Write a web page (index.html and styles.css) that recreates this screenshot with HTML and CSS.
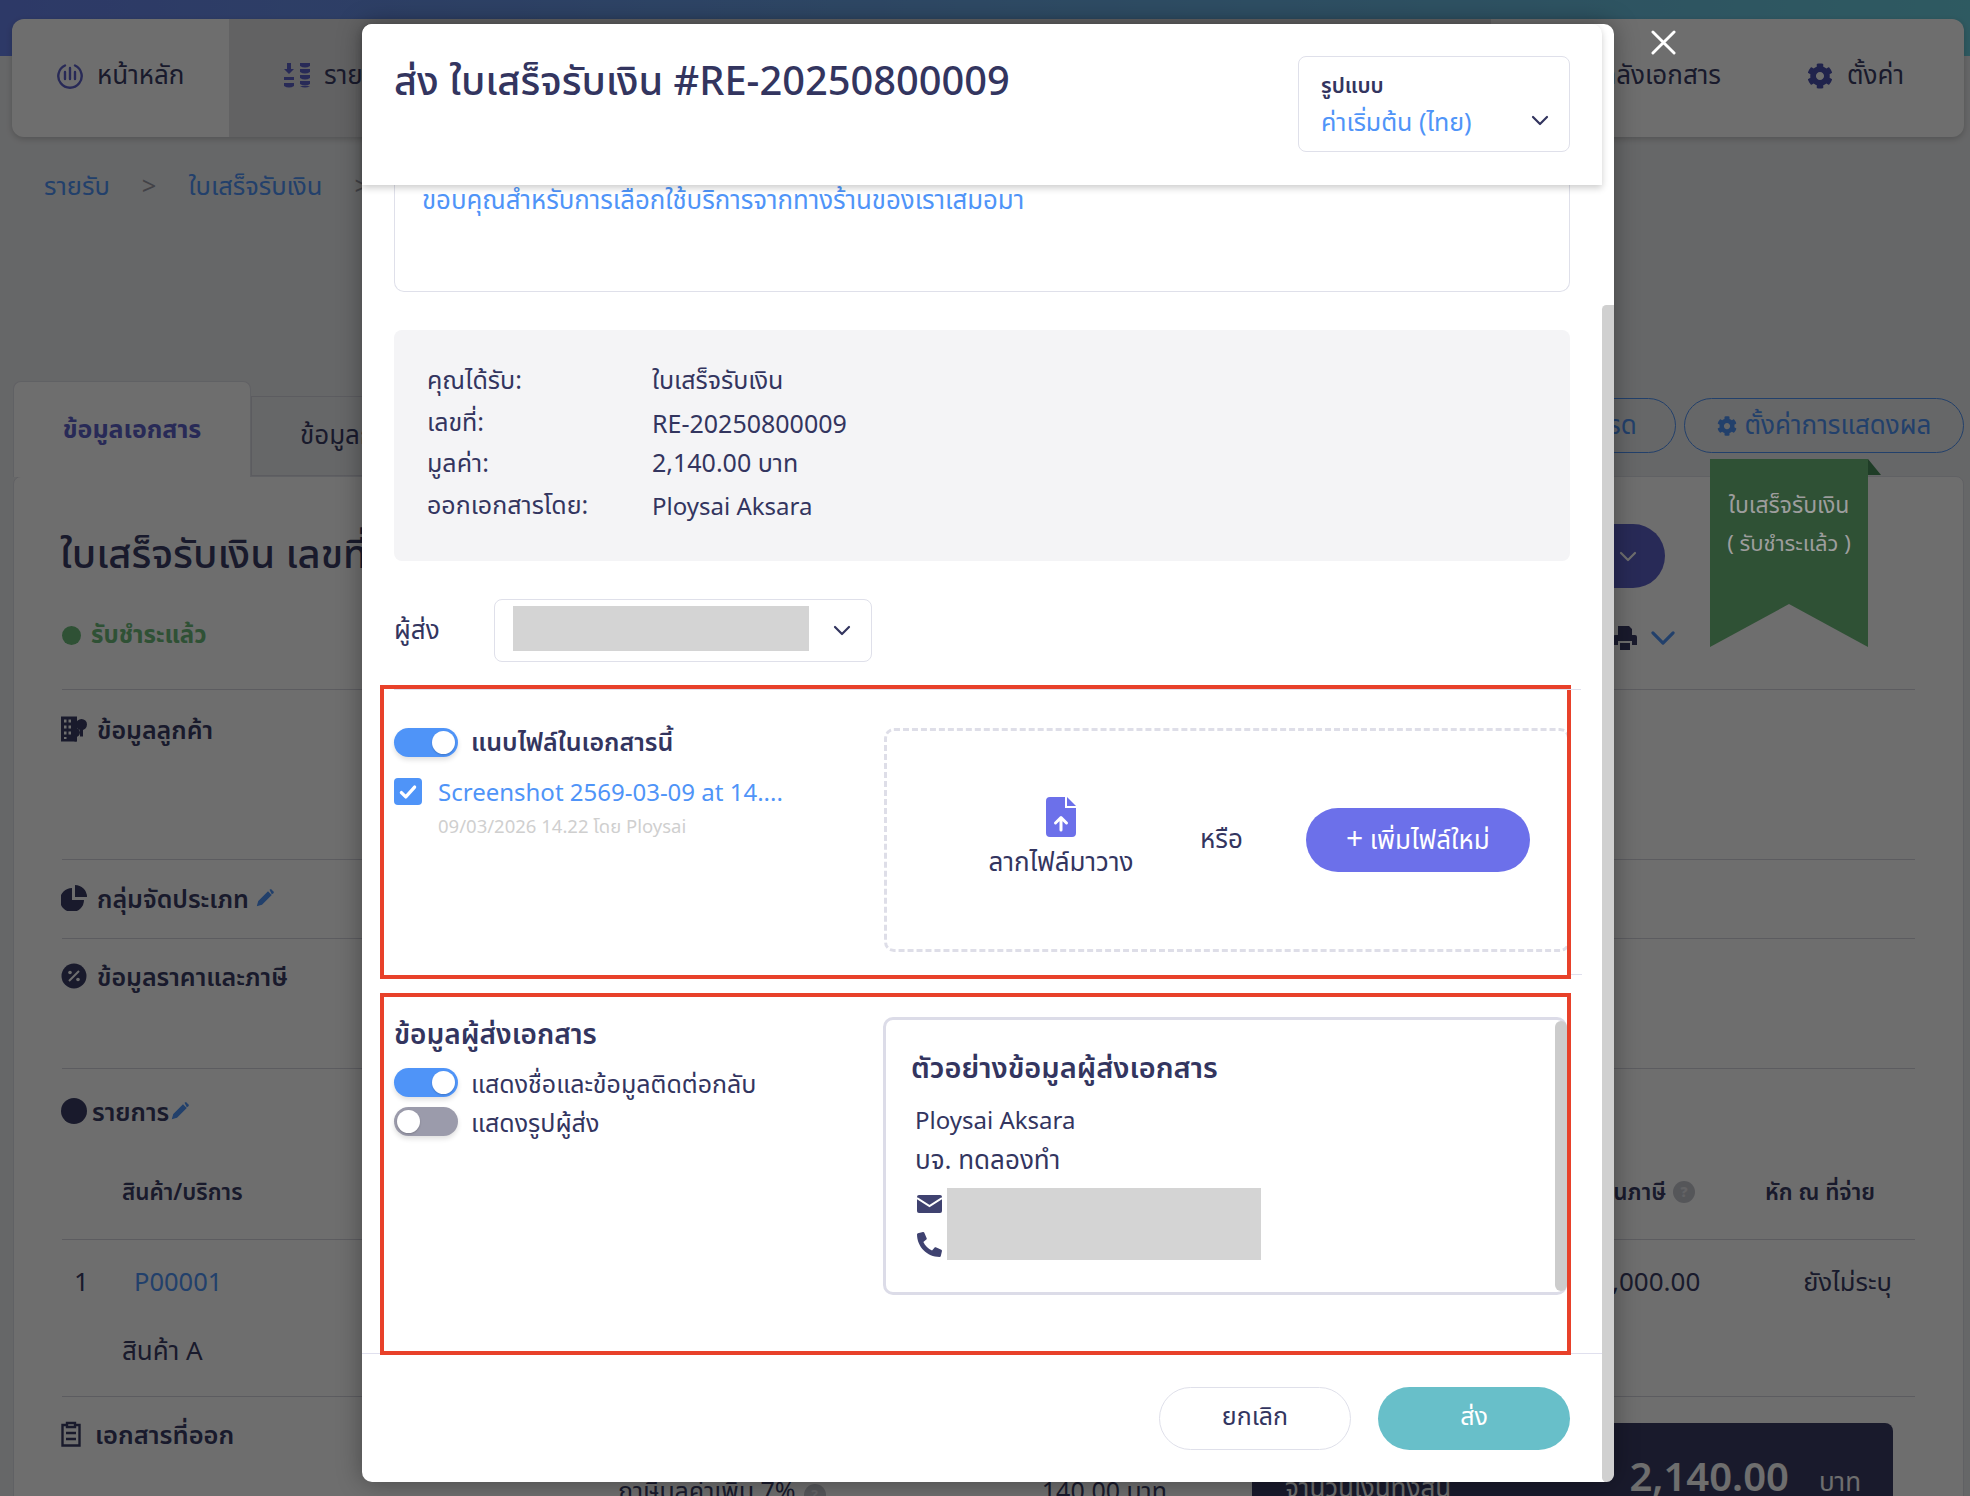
FILE: index.html
```html
<!DOCTYPE html>
<html lang="th">
<head>
<meta charset="utf-8">
<title>ส่ง ใบเสร็จรับเงิน</title>
<link rel="stylesheet" href="styles.css">
</head>
<body>
<svg class="defs" width="0" height="0">
  <symbol id="gear" viewBox="0 0 512 512"><path fill="currentColor" d="M487.4 315.7l-42.6-24.6c4.3-23.2 4.3-47 0-70.2l42.6-24.6c4.9-2.8 7.1-8.6 5.5-14-11.1-35.6-30-67.8-54.7-94.6-3.8-4.1-10-5.1-14.8-2.3L380.8 110c-17.9-15.4-38.5-27.3-60.8-35.1V25.8c0-5.6-3.9-10.5-9.4-11.7-36.7-8.2-74.3-7.8-109.2 0-5.5 1.2-9.4 6.1-9.4 11.7V75c-22.2 7.9-42.8 19.8-60.8 35.1L88.7 85.5c-4.9-2.8-11-1.9-14.8 2.3-24.7 26.7-43.6 58.9-54.7 94.6-1.7 5.4.6 11.2 5.5 14L67.3 221c-4.3 23.2-4.3 47 0 70.2l-42.6 24.6c-4.9 2.8-7.1 8.6-5.5 14 11.1 35.6 30 67.8 54.7 94.6 3.8 4.1 10 5.1 14.8 2.3l42.6-24.6c17.9 15.4 38.5 27.3 60.8 35.1v49.2c0 5.6 3.9 10.5 9.4 11.7 36.7 8.2 74.3 7.8 109.2 0 5.5-1.2 9.4-6.1 9.4-11.7v-49.2c22.2-7.9 42.8-19.8 60.8-35.1l42.6 24.6c4.9 2.8 11 1.9 14.8-2.3 24.7-26.7 43.6-58.9 54.7-94.6 1.5-5.5-.7-11.3-5.6-14.1zM256 336c-44.1 0-80-35.9-80-80s35.9-80 80-80 80 35.9 80 80-35.9 80-80 80z"/></symbol>
  <symbol id="pen" viewBox="0 0 24 24"><path fill="currentColor" d="M1 23l2-7L16 3l5 5L8 21zM18 1l2-1 4 4-1 2-2 1z"/></symbol>
  <symbol id="chev" viewBox="0 0 18 11"><path fill="none" stroke="currentColor" stroke-width="2.200" stroke-linecap="round" stroke-linejoin="round" d="M2 2l7 7 7-7"/></symbol>
</svg>

<div class="page">
  <nav class="nav">
    <div class="nav-tab nav-active">
      <svg class="nav-icon" viewBox="0 0 26 26"><path fill="none" stroke="currentColor" stroke-width="2.400" stroke-linecap="round" d="M18 2.500A11.700 11.700 0 1 1 8 2.500M8 9v7M13 5v11M18 9v7"/></svg>
      <span>หน้าหลัก</span>
    </div>
    <div class="nav-tab nav-second">
      <svg class="nav-icon" viewBox="0 0 26 26"><path fill="currentColor" d="M3 0h4v6h3l-5 5-5-5h3zM0 14h10v3H0zM0 20h10v3q-5 3-10 0zM16 0h10v3q-5 3-10 0zM16 6h10v3q-5 3-10 0zM16 12h10v3q-5 3-10 0zM16 18h10v3q-5 3-10 0zM16 23h10q-5 3-10 0z"/></svg>
      <span>รายรับ</span>
    </div>
    <div class="nav-spacer"></div>
    <div class="nav-tab nav-docs"><span>คลังเอกสาร</span></div>
    <div class="nav-tab nav-set">
      <svg class="nav-icon gear-icon"><use href="#gear"/></svg>
      <span>ตั้งค่า</span>
    </div>
  </nav>

  <div class="crumbs">
    <a>รายรับ</a><i>&gt;</i><a>ใบเสร็จรับเงิน</a><i>&gt;</i><a>RE-20250800009</a>
  </div>

  <div class="tabbar">
    <div class="tab tab-on">ข้อมูลเอกสาร</div>
    <div class="tab tab-off">ข้อมูลการชำระเงิน</div>
    <div class="tab-gap"></div>
    <div class="pill pill-fav">รายการโปรด</div>
    <div class="pill pill-set"><svg class="pill-gear"><use href="#gear"/></svg>ตั้งค่าการแสดงผล</div>
  </div>

  <main class="card">
    <div class="ribbon">
      <span class="ribbon-fold"></span>
      <div class="ribbon-body">
        <div>ใบเสร็จรับเงิน</div>
        <div class="ribbon-sub">( รับชำระแล้ว )</div>
      </div>
    </div>

    <section class="doc-head">
      <div class="doc-left">
        <h1>ใบเสร็จรับเงิน เลขที่ RE-20250800009</h1>
        <div class="status"><span class="dot"></span>รับชำระแล้ว</div>
      </div>
      <div class="doc-right">
        <div class="action"><svg class="chev-sm"><use href="#chev"/></svg></div>
        <div class="tools">
          <svg class="print" viewBox="0 0 24 24"><path fill="currentColor" d="M5 0h11l3 3v6H5zM2 9h20q2 0 2 2v8h-5v-4H5v4H0v-8q0-2 2-2zM7 17h10v7H7z"/></svg>
          <svg class="chev-lg"><use href="#chev"/></svg>
        </div>
      </div>
    </section>

    <section class="sec sec-cust">
      <h2><svg class="sec-icon" viewBox="0 0 26 25"><path fill="currentColor" fill-rule="evenodd" d="M0 0h16v25H0zM3 3v3h2.500V3zm4.500 0v3H10V3zM3 9v3h2.500V9zm4.500 0v3H10V9zM3 15v3h2.500v-3zm4.500 0v3H10v-3zM3 20.500v2h2.500v-2z"/><circle cx="14.500" cy="16" r="4.500" fill="currentColor"/><path fill="currentColor" d="M13.500 18h2v7h-2z"/><circle cx="20.500" cy="8" r="5.500" fill="currentColor"/><path fill="currentColor" d="M19 11h3v9h-3z"/></svg>ข้อมูลลูกค้า</h2>
    </section>
    <section class="sec sec-group">
      <h2><svg class="sec-icon" viewBox="0 0 26 26"><path fill="currentColor" d="M11 3v12h12A12 12 0 1 1 11 3zM14 0a12 12 0 0 1 12 12H14z"/></svg>กลุ่มจัดประเภท<svg class="pen"><use href="#pen"/></svg></h2>
    </section>
    <section class="sec sec-price">
      <h2><svg class="sec-icon" viewBox="0 0 26 26"><circle cx="13" cy="13" r="12.500" fill="currentColor"/><path stroke="#fff" stroke-width="2" d="M8 18L18 8"/><circle cx="9" cy="9.500" r="1.800" fill="#fff"/><circle cx="17" cy="16.500" r="1.800" fill="#fff"/></svg>ข้อมูลราคาและภาษี</h2>
    </section>
    <section class="sec sec-list">
      <h2 class="list-title"><span class="list-dot"></span>รายการ<svg class="pen"><use href="#pen"/></svg></h2>
      <div class="thead">
        <span class="th-name">สินค้า/บริการ</span>
        <span class="th-tax">มูลค่าก่อนภาษี<b class="help">?</b></span>
        <span class="th-wh">หัก ณ ที่จ่าย</span>
      </div>
    </section>
    <section class="sec sec-row">
      <div class="tr">
        <span class="td-no">1</span>
        <a class="td-code">P00001</a>
        <span class="td-amt">2,000.00</span>
        <span class="td-wh">ยังไม่ระบุ</span>
      </div>
      <div class="td-desc">สินค้า A</div>
    </section>
    <section class="sec-docs">
      <h2 class="docs-title"><svg class="sec-icon clip" viewBox="0 0 20 26"><path fill="none" stroke="currentColor" stroke-width="2.400" d="M6 4H1.500v20.500h17V4H14M6 2h8v4H6zM5 12h10M5 18h10"/></svg>เอกสารที่ออก</h2>
      <div class="vat"><span>ภาษีมูลค่าเพิ่ม 7%<b class="help">?</b></span><span>140.00 บาท</span></div>
      <div class="total"><span class="total-label">จำนวนเงินทั้งสิ้น</span><span class="total-num">2,140.00</span><span class="total-unit">บาท</span></div>
    </section>
  </main>
</div>

<div class="overlay"></div>

<svg class="close" viewBox="0 0 26 26"><path stroke="#fff" stroke-width="3" stroke-linecap="round" d="M2 2l22 22M24 2L2 24"/></svg>

<div class="modal">
  <header class="m-head">
    <h1 class="m-title">ส่ง ใบเสร็จรับเงิน #RE-20250800009</h1>
    <div class="m-format">
      <div class="m-format-text">
        <div class="m-format-label">รูปแบบ</div>
        <div class="m-format-value">ค่าเริ่มต้น (ไทย)</div>
      </div>
      <svg class="m-chev"><use href="#chev"/></svg>
    </div>
  </header>

  <div class="m-body">
    <div class="msg">ขอบคุณสำหรับการเลือกใช้บริการจากทางร้านของเราเสมอมา</div>

    <div class="info">
      <span>คุณได้รับ:</span><span>ใบเสร็จรับเงิน</span>
      <span>เลขที่:</span><span>RE-20250800009</span>
      <span>มูลค่า:</span><span>2,140.00 บาท</span>
      <span>ออกเอกสารโดย:</span><span class="latin">Ploysai Aksara</span>
    </div>

    <div class="sender">
      <span class="sender-label">ผู้ส่ง</span>
      <div class="sender-select"><span class="mask sender-mask"></span><svg class="m-chev"><use href="#chev"/></svg></div>
    </div>

    <section class="red red-files">
      <div class="files-left">
        <div class="toggle-row">
          <span class="toggle on"></span><strong>แนบไฟล์ในเอกสารนี้</strong>
        </div>
        <div class="file-row">
          <span class="check"><svg viewBox="0 0 20 20"><path fill="none" stroke="#fff" stroke-width="3" stroke-linecap="round" stroke-linejoin="round" d="M4 10.500l4 4 8-9"/></svg></span>
          <div>
            <div class="file-name">Screenshot 2569-03-09 at 14....</div>
            <div class="file-meta">09/03/2026 14.22 โดย Ploysai</div>
          </div>
        </div>
      </div>
      <div class="drop">
        <div class="drop-hint">
          <svg class="file-icon" viewBox="0 0 30 40"><path fill="#6c70ea" d="M4 0h15v11h11v25q0 4-4 4H4q-4 0-4-4V4q0-4 4-4z"/><path fill="#6c70ea" d="M21 0l9 9h-9z"/><path fill="none" stroke="#fff" stroke-width="3" stroke-linecap="round" stroke-linejoin="round" d="M15 33V21M9.500 26l5.500-5.500 5.500 5.500"/></svg>
          <span>ลากไฟล์มาวาง</span>
        </div>
        <span class="drop-or">หรือ</span>
        <button class="add-btn"><b>+</b> เพิ่มไฟล์ใหม่</button>
      </div>
    </section>

    <section class="red red-sender">
      <div class="sender-opts">
        <h3>ข้อมูลผู้ส่งเอกสาร</h3>
        <div class="opt"><span class="toggle on"></span><span class="opt-text">แสดงชื่อและข้อมูลติดต่อกลับ</span></div>
        <div class="opt"><span class="toggle off"></span><span class="opt-text">แสดงรูปผู้ส่ง</span></div>
      </div>
      <div class="preview">
        <h3>ตัวอย่างข้อมูลผู้ส่งเอกสาร</h3>
        <div class="preview-line latin">Ploysai Aksara</div>
        <div class="preview-line">บจ. ทดลองทำ</div>
        <div class="contact">
          <div class="contact-icons">
            <svg viewBox="0 0 25 18"><rect width="25" height="18" rx="2" fill="#3f4270"/><path fill="none" stroke="#fff" stroke-width="2" d="M0 3l12.500 8L25 3"/></svg>
            <svg viewBox="0 0 512 512"><path fill="#3f4270" transform="matrix(-1 0 0 1 512 0)" d="M493.400 24.600l-104-24c-11.300-2.600-22.900 3.300-27.500 13.900l-48 112c-4.200 9.800-1.400 21.300 6.900 28l60.600 49.600c-36 76.700-98.900 140.500-177.200 177.200l-49.600-60.600c-6.800-8.300-18.200-11.100-28-6.900l-112 48C3.900 366.500-2 378.100.6 389.400l24 104C27.100 504.200 36.700 512 48 512c256.100 0 464-207.500 464-464 0-11.200-7.700-20.900-18.600-23.400z"/></svg>
          </div>
          <span class="mask contact-mask"></span>
        </div>
        <span class="preview-bar"></span>
      </div>
    </section>
  </div>

  <footer class="m-foot">
    <button class="btn-cancel">ยกเลิก</button>
    <button class="btn-send">ส่ง</button>
  </footer>
  <span class="m-scroll"></span>
</div>
</body>
</html>
```
FILE: styles.css
```css
* { box-sizing: border-box; }
html, body { margin: 0; height: 100%; }
body {
  width: 1970px;
  height: 1496px;
  overflow: hidden;
  position: relative;
  font-family: "Noto Sans", "Noto Sans Thai", "Liberation Sans", sans-serif;
  font-size: 26px;
  color: #3a3d66;
  background: linear-gradient(90deg, #6a84ee, #6cd0e0) top / 100% 56px no-repeat, #edeef0;
}
h1, h2, h3 { margin: 0; }
button { font: inherit; border: 0; cursor: pointer; }
.defs { position: absolute; }
.latin { font-size: 24px; }

/* background page */
.page { padding: 19px 6px 0 12px; }
.nav { display: flex; height: 118px; background: #fff; border-radius: 12px; overflow: hidden; box-shadow: 0 2px 6px rgba(0,0,0,.2); }
.nav-tab { display: flex; align-items: center; gap: 14px; padding-bottom: 4px; font-size: 26px; }
.nav-active { width: 217px; padding-left: 45px; }
.nav-second { width: 300px; padding-left: 55px; background: #e4e4e6; }
.nav-spacer { flex: 1; background: #e4e4e6; }
.nav-docs { width: 230px; justify-content: flex-end; }
.nav-set { width: 243px; padding-left: 86px; }
.nav-icon { width: 26px; height: 26px; color: #5e61c9; flex: none; }
.gear-icon { color: #4c51b0; }

.crumbs { display: flex; align-items: center; margin-top: 33px; padding-left: 32px; font-size: 25.500px; line-height: 30px; color: #4f94f8; }
.crumbs i { font-style: normal; margin: 0 32px; color: #9a9aa6; }

.tabbar { display: flex; align-items: flex-end; height: 95px; margin-top: 181px; padding-left: 1px; }
.tab { display: flex; align-items: center; }
.tab-on { width: 238px; height: 96px; margin-bottom: -1px; justify-content: center; background: #fff; border: 1px solid #dfe0e8; border-bottom: 0; border-radius: 8px 8px 0 0; color: #5e61c9; font-size: 25px; font-weight: 700; position: relative; z-index: 1; }
.tab-off { width: 400px; height: 80px; padding-left: 48px; background: #edeef0; border: 1px solid #d5d6de; }
.tab-gap { flex: 1; }
.pill { height: 55px; margin-bottom: 23px; border: 1.500px solid #4f94f8; border-radius: 28px; color: #4f94f8; display: flex; align-items: center; justify-content: center; }
.pill-fav { width: 200px; margin-right: 8px; padding-right: 8px; }
.pill-set { width: 280px; gap: 8px; }
.pill-gear { width: 20px; height: 22px; }

.card { position: relative; margin-left: 1px; height: 1100px; padding: 0 48px; background: #fff; border: 1px solid #dfe0e8; border-radius: 8px 8px 0 0; }
.ribbon { position: absolute; left: 1696px; top: -18px; width: 171px; height: 188px; z-index: 20; }
.ribbon-fold { position: absolute; left: 158px; top: 0; width: 13px; height: 16px; background: #1f3d27; clip-path: polygon(0 0, 100% 100%, 0 100%); }
.ribbon-body { width: 158px; height: 188px; padding-top: 26px; background: #2f5135; color: #9d9d9d; text-align: center; font-size: 23px; line-height: 38px; white-space: nowrap; clip-path: polygon(0 0, 100% 0, 100% 100%, 50% 145px, 0 100%); }
.ribbon-sub { font-size: 22px; }

.doc-head { height: 213px; padding-top: 47px; display: flex; justify-content: space-between; border-bottom: 1px solid #d5d6de; }
.doc-left h1 { margin-left: -2px; font-size: 40px; font-weight: 500; line-height: 58px; color: #3a3d66; }
.status { display: flex; align-items: center; gap: 10px; margin-top: 35px; font-size: 24px; font-weight: 700; color: #6dbc7b; }
.dot { width: 19px; height: 19px; border-radius: 50%; background: #6dbc7b; }
.doc-right { width: 320px; padding-right: 250px; display: flex; flex-direction: column; align-items: flex-end; }
.action { width: 78px; height: 64px; flex: none; padding-left: 3px; background: #5e61c9; border-radius: 0 32px 32px 0; display: flex; align-items: center; justify-content: center; color: #fff; }
.chev-sm { width: 18px; height: 11px; }
.tools { display: flex; align-items: center; gap: 13px; margin-top: 38px; margin-right: -11px; }
.print { width: 24px; height: 24px; color: #3a3d66; }
.chev-lg { width: 26px; height: 16px; color: #4f94f8; }

.sec { border-bottom: 1px solid #d5d6de; }
.sec h2 { display: flex; align-items: center; gap: 10px; font-size: 25px; font-weight: 600; line-height: 30px; color: #3a3d66; }
.sec-icon { width: 26px; height: 26px; flex: none; margin-left: -1px; }
.pen { width: 18px; height: 18px; margin-left: -3px; color: #4f94f8; }
.sec-cust { height: 170px; padding-top: 24px; }
.sec-group { height: 79px; padding-top: 23px; }
.sec-price { height: 130px; padding-top: 22px; }
.sec-list { height: 171px; padding-top: 27px; position: relative; }
.list-dot { width: 26px; height: 26px; margin-left: -1px; border-radius: 50%; background: #3a3d66; flex: none; }
.sec .list-title { gap: 5px; }
.thead { display: flex; margin-top: 51px; font-size: 22.500px; font-weight: 600; line-height: 30px; }
.th-name { margin-left: 60px; }
.th-tax { margin-left: auto; display: flex; align-items: center; gap: 7px; }
.th-wh { margin-left: 70px; margin-right: 40px; }
.help { width: 22px; height: 22px; border-radius: 50%; background: #c6c7cf; color: #e5e5ea; font-size: 14px; display: inline-flex; align-items: center; justify-content: center; }
.sec-row { height: 157px; padding-top: 26px; }
.tr { display: flex; line-height: 30px; }
.td-no { margin-left: 12px; width: 60px; }
.td-code { color: #4f94f8; font-size: 25.500px; }
.td-amt { margin-left: auto; }
.td-wh { margin-left: 103px; margin-right: 23px; font-size: 25.500px; }
.td-desc { margin: 39px 0 0 60px; line-height: 30px; }
.sec-docs { display: flex; align-items: flex-start; position: relative; }
.docs-title { width: 556px; margin-top: 22px; display: flex; align-items: center; gap: 14px; font-size: 25.500px; font-weight: 600; line-height: 30px; }
.clip { width: 20px; }
.vat { width: 634px; flex: none; margin-top: 78px; display: flex; justify-content: space-between; padding-right: 85px; font-size: 25px; line-height: 30px; }
.vat .help { margin-left: 8px; }
.total { flex: none; width: 641px; height: 120px; margin-top: 26px; padding: 28px 32px 0 33px; display: flex; align-items: flex-start; background: #3a3d66; border-radius: 8px 8px 0 0; color: #fff; }
.total-label { margin-top: 18px; }
.total-num { margin-left: auto; font-size: 40px; font-weight: 600; line-height: 50px; }
.total-unit { margin-left: 30px; margin-top: 12px; }

.overlay { position: absolute; inset: 0; z-index: 10; background: rgba(0,0,0,.57); }
.close { position: absolute; left: 1651px; top: 30px; width: 25px; height: 25px; z-index: 30; }

/* modal */
.modal { position: absolute; left: 362px; top: 24px; z-index: 30; width: 1252px; height: 1458px; display: flex; flex-direction: column; background: #fff; border-radius: 10px; box-shadow: 0 0 24px rgba(0,0,0,.35); color: #33355f; }
.m-head { position: relative; z-index: 2; flex: none; width: 1240px; height: 161px; padding: 31px 32px 0 32px; display: flex; justify-content: space-between; align-items: flex-start; background: #fff; border-radius: 10px 10px 0 0; box-shadow: 0 3px 7px rgba(0,0,0,.2); }
.m-title { font-size: 39.800px; line-height: 50px; font-weight: 500; color: #33355f; }
.m-format { width: 272px; height: 96px; margin-top: 1px; padding: 14px 20px 0 22px; display: flex; justify-content: space-between; border: 1px solid #dfe0ea; border-radius: 8px; }
.m-format-label { font-size: 21px; line-height: 28px; font-weight: 600; }
.m-format-value { margin-top: 4px; font-size: 25px; line-height: 36px; color: #4f94f8; }
.m-chev { width: 18px; height: 11px; flex: none; color: #33355f; }
.m-format .m-chev { margin-top: 44px; }

.m-body { flex: 1; min-height: 0; padding: 0 44px 0 32px; }
.msg { height: 107px; padding: 0 27px; border: 1px solid #dfe0ea; border-top: 0; border-radius: 0 0 10px 10px; color: #4f94f8; font-size: 25.800px; line-height: 28px; }
.info { margin-top: 38px; height: 231px; padding: 30px 33px 0; display: grid; grid-template-columns: 225px 1fr; grid-auto-rows: 41.700px; align-items: center; background: #f4f4f6; border-radius: 8px; font-size: 25px; }
.sender { height: 63px; margin-top: 38px; display: flex; align-items: center; gap: 47px; }
.sender-label { width: 53px; }
.sender-select { width: 378px; height: 63px; padding: 0 20px 0 18px; display: flex; align-items: center; justify-content: space-between; border: 1px solid #dfe0ea; border-radius: 8px; }
.mask { display: block; background: #d4d4d4; }
.sender-mask { width: 296px; height: 45px; margin-top: -4px; }

.red { position: relative; margin: 0 -1px 0 -14px; padding-left: 10px; border: 4px solid #e8412a; display: flex; background: #fff; }
.red-files { height: 294px; margin-top: 23px; padding-top: 39px; }
.red-files::before { content: ""; position: absolute; left: 10px; right: -14px; top: 0; height: 1px; background: #e0e0ee; }
.red-files::after { content: ""; position: absolute; left: 100%; width: 11px; bottom: 0; height: 1px; margin-left: 4px; background: #e0e0ee; }
.red-sender { height: 362px; margin-top: 14px; padding-top: 20px; z-index: 1; }

.files-left { width: 490px; flex: none; }
.toggle-row { display: flex; align-items: center; gap: 13px; height: 29px; }
.toggle-row strong { margin-top: 1px; font-weight: 600; font-size: 25px; }
.toggle { position: relative; flex: none; display: block; width: 64px; height: 29px; border-radius: 15px; box-shadow: 0 3px 5px rgba(0,0,0,.12); }
.toggle::after { content: ""; position: absolute; top: 3px; width: 23px; height: 23px; border-radius: 50%; background: #fff; box-shadow: 0 1px 2px rgba(0,0,0,.2); }
.toggle.on { background: #4f94f8; }
.toggle.on::after { right: 3px; }
.toggle.off { background: #9b9bab; }
.toggle.off::after { left: 3px; }
.file-row { display: flex; gap: 16px; margin-top: 21px; }
.check { flex: none; width: 28px; height: 27px; border-radius: 4px; background: #4f94f8; display: flex; align-items: center; justify-content: center; }
.check svg { width: 22px; height: 22px; }
.file-name { color: #4f94f8; font-size: 24px; line-height: 28px; }
.file-meta { margin-top: 7px; color: #cfcfcf; font-size: 18.500px; line-height: 26px; }

.drop { flex: none; width: 686px; height: 224px; padding-left: 101px; display: flex; align-items: center; border: 3px dashed #dedee8; border-radius: 10px; clip-path: inset(0 3px 0 0); }
.drop-hint { width: 146px; margin-top: -5px; display: flex; flex-direction: column; align-items: center; gap: 6px; line-height: 36px; white-space: nowrap; }
.file-icon { width: 30px; height: 40px; }
.drop-or { margin: 0 63px 0 66px; }
.add-btn { width: 224px; height: 64px; padding-bottom: 4px; border-radius: 32px; background: #6c70ea; color: #fff; font-size: 26px; }
.add-btn b { font-weight: 400; font-size: 30px; }

.sender-opts { width: 489px; flex: none; }
.sender-opts h3 { margin-top: -3px; font-size: 28px; font-weight: 600; line-height: 38px; }
.opt { display: flex; align-items: center; gap: 13px; height: 39px; font-size: 25px; }
.opt-text { padding-top: 4px; }
.sender-opts h3 + .opt { margin-top: 11px; }

.preview { position: relative; flex: none; width: 684px; height: 278px; padding: 27px 0 0 25px; border: 3px solid #dcdce8; border-radius: 10px; }
.preview h3 { font-size: 29px; font-weight: 600; line-height: 40px; }
.preview-line { margin: 20px 0 0 4px; line-height: 26px; }
.preview-line + .preview-line { margin-top: 13px; }
.contact { display: flex; gap: 5px; margin: 16px 0 0 6px; }
.contact-icons { width: 25px; display: flex; flex-direction: column; align-items: center; gap: 19px; padding-top: 7px; }
.contact-icons svg { width: 25px; height: 18px; flex: none; }
.contact-icons svg + svg { height: 25px; }
.contact-mask { width: 314px; height: 72px; }
.preview-bar { position: absolute; right: -3px; top: 1px; bottom: 1px; width: 12px; border-radius: 6px; background: #cccccc; }

.m-foot { flex: none; position: relative; width: 1240px; height: 129px; margin-top: -2px; padding: 33px 32px 0 0; display: flex; justify-content: flex-end; gap: 27px; border-top: 1px solid #e0e0ee; }
.m-foot button { width: 192px; height: 63px; padding-bottom: 4px; border-radius: 32px; font-size: 25px; }
.btn-cancel { background: #fff; color: #33355f; border: 1px solid #dfe0ea; }
.btn-send { background: #68bfc9; color: #fff; }
.m-scroll { position: absolute; right: 0; top: 281px; bottom: 0; width: 12px; background: #d0d0d0; border-radius: 6px 0 10px 6px; }
```
